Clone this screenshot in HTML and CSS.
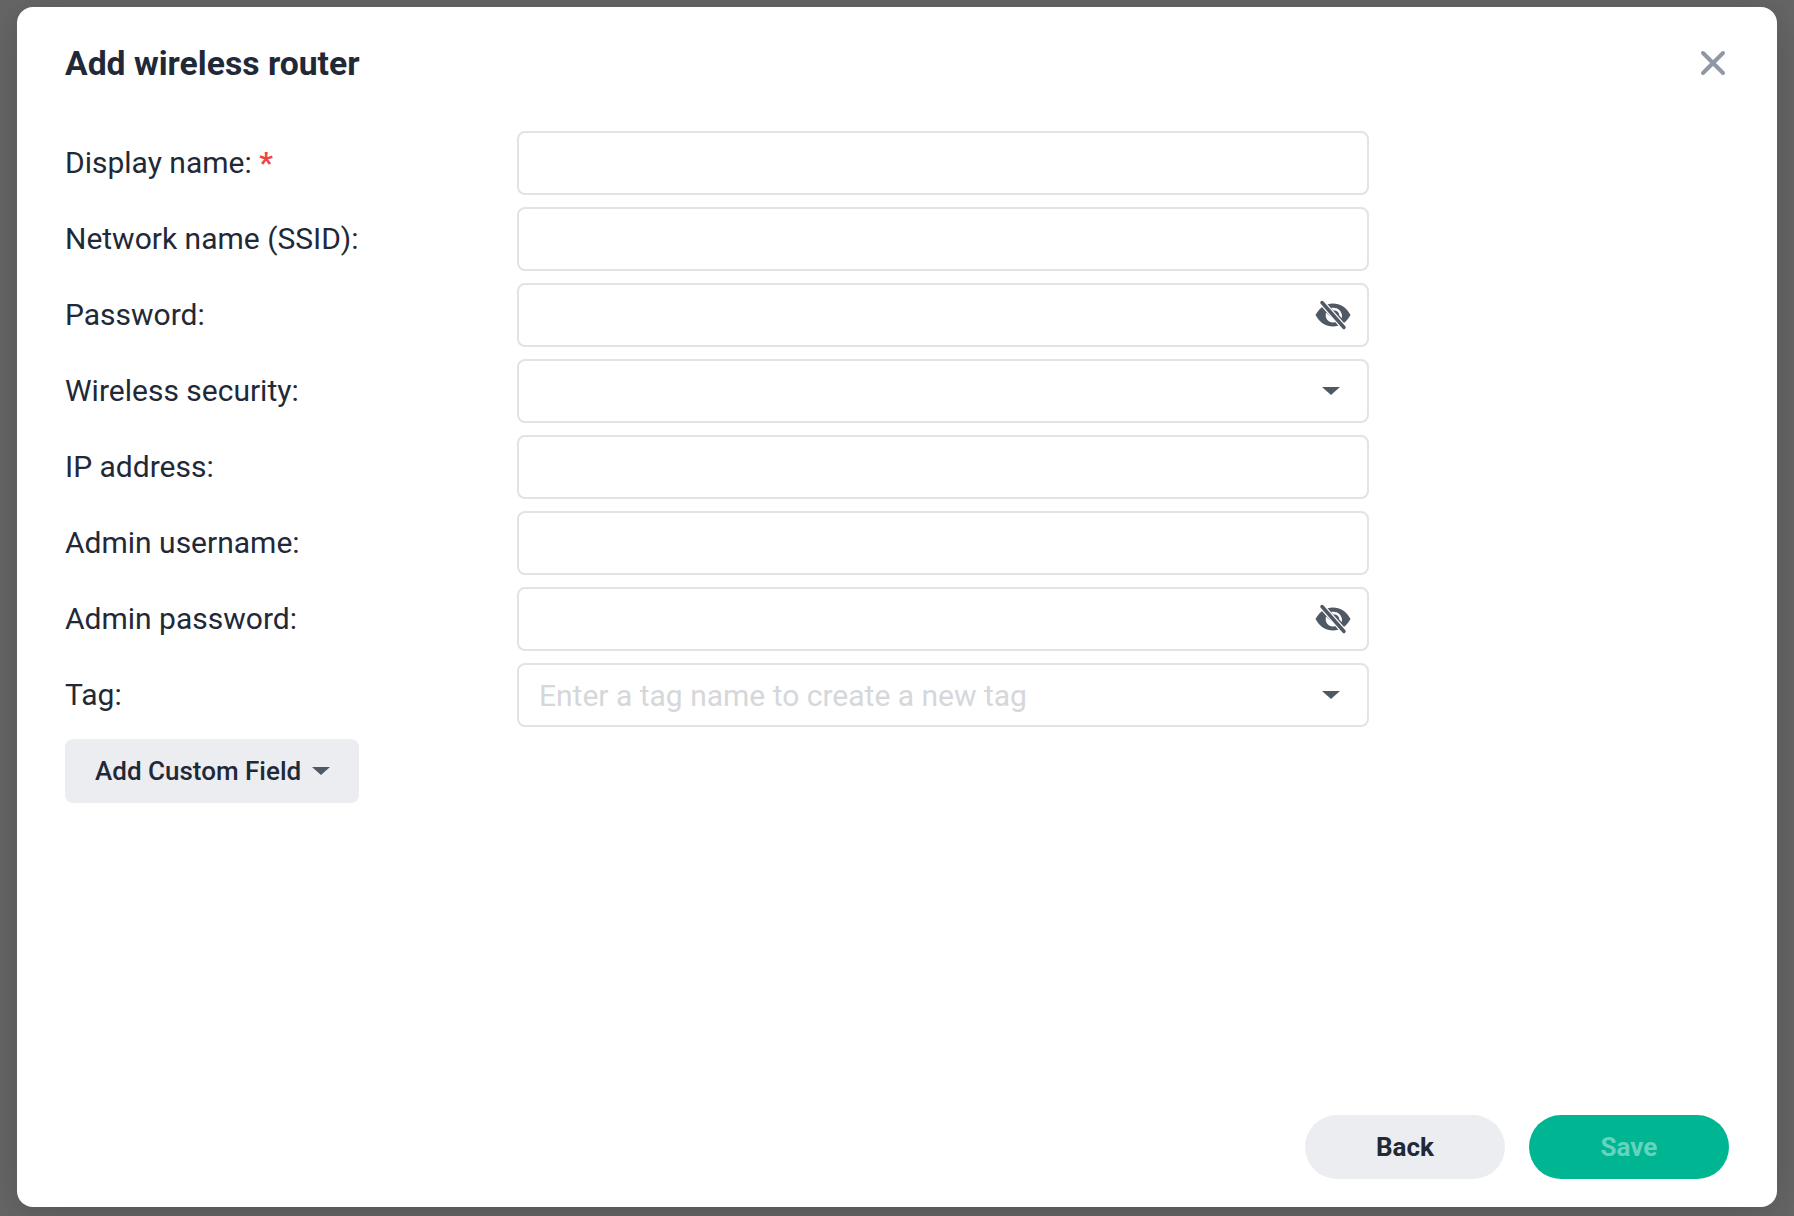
FILE: index.html
```html
<!DOCTYPE html>
<html lang="en">
<head>
<meta charset="utf-8">
<title>Add wireless router</title>
<link rel="stylesheet" href="styles.css">
</head>
<body>
<div class="modal">
  <header class="modal-head">
    <h1 class="modal-title">Add wireless router</h1>
    <button class="close" type="button" aria-label="Close">
      <svg width="26" height="26" viewBox="0 0 26 26"><path d="M3 3l20 20M23 3L3 23" fill="none" stroke="#8f98a3" stroke-width="4" stroke-linecap="round"/></svg>
    </button>
  </header>
  <form class="form">
    <div class="row"><label class="label">Display name: <span class="req">*</span></label><div class="field"></div></div>
    <div class="row"><label class="label">Network name (SSID):</label><div class="field"></div></div>
    <div class="row"><label class="label">Password:</label><div class="field">
      <svg class="eye" width="36" height="30" viewBox="0 0 36 30"><path class="eye-body" d="M0.500 15C5 7 11 3.500 18 3.500S31 7 35.500 15C31 23 25 26.500 18 26.500S5 23 .5 15z"/><path class="eye-hole" d="M11 12.500c-1.500 5.500 2 10 7 10 1.200 0 2.300-.2 3.300-.7z"/><path class="eye-hole" d="M16 8c5-1.500 11 2 11 8 0 .8-.1 1.500-.3 2.200l-2.500-2.900c0-3.300-3-5.300-5.700-4.800z"/><path class="eye-gap" d="M6.500 2l23 26"/><path class="eye-slash" d="M7 2.500l22 25"/></svg>
    </div></div>
    <div class="row"><label class="label">Wireless security:</label><div class="field"><span class="caret caret-field"></span></div></div>
    <div class="row"><label class="label">IP address:</label><div class="field"></div></div>
    <div class="row"><label class="label">Admin username:</label><div class="field"></div></div>
    <div class="row"><label class="label">Admin password:</label><div class="field">
      <svg class="eye" width="36" height="30" viewBox="0 0 36 30"><path class="eye-body" d="M0.500 15C5 7 11 3.500 18 3.500S31 7 35.500 15C31 23 25 26.500 18 26.500S5 23 .5 15z"/><path class="eye-hole" d="M11 12.500c-1.500 5.500 2 10 7 10 1.200 0 2.300-.2 3.300-.7z"/><path class="eye-hole" d="M16 8c5-1.500 11 2 11 8 0 .8-.1 1.500-.3 2.200l-2.500-2.900c0-3.300-3-5.300-5.700-4.800z"/><path class="eye-gap" d="M6.500 2l23 26"/><path class="eye-slash" d="M7 2.500l22 25"/></svg>
    </div></div>
    <div class="row"><label class="label">Tag:</label><div class="field"><span class="placeholder">Enter a tag name to create a new tag</span><span class="caret caret-field"></span></div></div>
    <div class="add-row"><button class="btn-add" type="button">Add Custom Field<span class="caret caret-btn"></span></button></div>
  </form>
  <footer class="modal-foot">
    <button class="pill pill-back" type="button">Back</button>
    <button class="pill pill-save" type="button">Save</button>
  </footer>
</div>
</body>
</html>
```
FILE: styles.css
```css
* { box-sizing: border-box; }
html, body { height: 100%; }
body {
  margin: 0;
  background: #666;
  font-family: Roboto, "Liberation Sans", sans-serif;
  color: #1f2937;
  padding: 7px 17px 9px;
  overflow: hidden;
}
.modal {
  height: 1200px;
  background: #fff;
  border-radius: 16px;
  box-shadow: 0 6px 40px rgba(0,0,0,.18);
  padding: 0 48px 28px;
  display: flex;
  flex-direction: column;
}
.modal-head {
  display: flex;
  justify-content: space-between;
  align-items: center;
  height: 124px;
  padding: 0 3px 12px 0;
}
.modal-title {
  margin: 0;
  padding-top: 1px;
  font-size: 33.700px;
  font-weight: 700;
  line-height: 40px;
}
.close {
  border: 0;
  background: none;
  padding: 0;
  display: flex;
}
.form {
  flex: 1;
  display: flex;
  flex-direction: column;
  gap: 12px;
}
.row {
  display: flex;
  align-items: center;
}
.label {
  width: 452px;
  font-size: 30px;
  line-height: 40px;
}
.req { color: #ef4444; font-weight: 700; }
.field {
  width: 852px;
  height: 64px;
  border: 2px solid #e0e3e8;
  border-radius: 8px;
  display: flex;
  align-items: center;
  justify-content: flex-end;
  padding: 0 16px 0 20px;
}
.placeholder {
  flex: 1;
  font-size: 30px;
  line-height: 35px;
  height: 35px;
  color: #d5d7da;
}
.eye { display: block; }
.eye-body { fill: #4f5964; }
.eye-hole { fill: #fff; }
.eye-gap { fill: none; stroke: #fff; stroke-width: 6; }
.eye-slash { fill: none; stroke: #4f5964; stroke-width: 3.500; stroke-linecap: round; }
.caret {
  display: block;
  width: 0;
  height: 0;
  border-left: 9px solid transparent;
  border-right: 9px solid transparent;
  border-top: 8px solid #4f5964;
}
.caret-field { margin-right: 11px; }
.caret-btn { margin-left: 11px; }
.add-row { display: flex; }
.btn-add {
  display: flex;
  align-items: center;
  height: 64px;
  padding: 0 29px 0 30px;
  border: 0;
  border-radius: 8px;
  background: #ebedf1;
  color: #1f2937;
  font: 500 26px Roboto, sans-serif;
}
.modal-foot {
  display: flex;
  justify-content: flex-end;
  gap: 24px;
}
.pill {
  width: 200px;
  height: 64px;
  border: 0;
  border-radius: 32px;
  font: 700 26px Roboto, sans-serif;
}
.pill-back { background: #ebedf1; color: #1f2937; }
.pill-save { background: #00b592; color: #66d3be; }
```
